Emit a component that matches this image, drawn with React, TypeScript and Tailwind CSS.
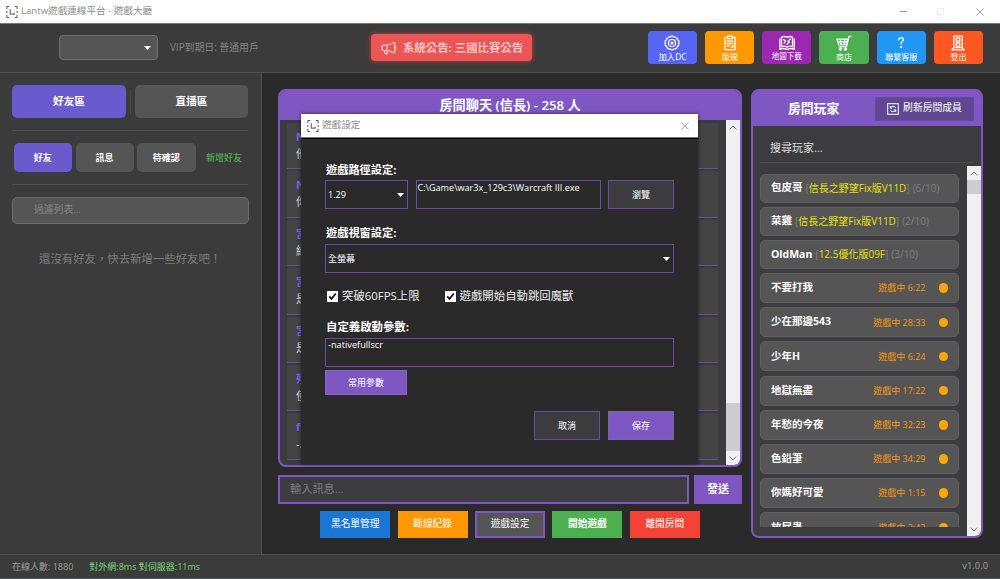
import React from 'react';
import clsx from 'clsx';

interface Player {
  name: string;
  time: string;
}

interface Room {
  host: string;
  map: string;
  slots: string;
}

const rooms: Room[] = [
  { host: '包皮哥', map: '信長之野望Fix版V11D', slots: '(6/10)' },
  { host: '菜雞', map: '信長之野望Fix版V11D', slots: '(2/10)' },
  { host: 'OldMan', map: '12.5優化版09F', slots: '(3/10)' },
];

const players: Player[] = [
  { name: '不要打我', time: '6:22' },
  { name: '少在那邊543', time: '28:33' },
  { name: '少年H', time: '6:24' },
  { name: '地獄無盡', time: '17:22' },
  { name: '年愁的今夜', time: '32:23' },
  { name: '色鉛筆', time: '34:29' },
  { name: '你媽好可愛', time: '1:15' },
  { name: '放屁蟲', time: '2:42' },
];

const messages = [
  { name: 'Nick', text: '他在嗎' },
  { name: 'Nick', text: '你好' },
  { name: '宮本', text: '給我' },
  { name: '宮本', text: '是喔' },
  { name: '宮本', text: '是的' },
  { name: '殘月', text: '使用' },
  { name: 'fire', text: '-.-' },
];

const iconProps = {
  viewBox: '0 0 16 16',
  fill: 'none',
  stroke: 'currentColor',
  strokeWidth: 1.3,
  strokeLinecap: 'round' as const,
  strokeLinejoin: 'round' as const,
  className: 'size-4 shrink-0',
};

const BadgeIcon = () => (
  <svg {...iconProps} strokeWidth={1.2}>
    <path d="M6 2.200Q8 0 10 2.200Q13 1.800 13.300 4.600Q16.200 6 14.400 8Q16.200 10 13.300 11.400Q13 14.200 10 13.800Q8 16 6 13.800Q3 14.200 2.700 11.400Q-.2 10 1.600 8Q-.2 6 2.700 4.600Q3 1.800 6 2.200z" />
    <circle cx="8" cy="8" r="3.500" />
    <circle cx="8" cy="8" r=".9" />
  </svg>
);

const ClipboardIcon = () => (
  <svg {...iconProps}>
    <path d="M5.500 2.300H3v12.400h10V2.300h-2.500" />
    <path d="M5.600 1.100h4.800v2.600H5.600zM5.200 6.200h5.600M5.200 8.500h5.600M5.200 10.800h2.500M10.900 10.500v1.700H9.400" />
  </svg>
);

const MapIcon = () => (
  <svg {...iconProps}>
    <path d="M2.500 2.200C4.500 1 6.500 1.500 8 2.600c1.500-1.100 3.500-1.600 5.500-.4v9.600c-2-1.200-4-.7-5.500.4-1.500-1.100-3.500-1.600-5.500-.4z" />
    <path d="M.8 4v10.300c2.500-1.100 5.200-.9 7.200.2 2-1.100 4.700-1.300 7.200-.2V4" />
    <path d="M4.600 4.600l2 1.300-1.500 2.300M11.500 4l-2.500 2 1.600 1.400M8 9.300l1.600-2" />
  </svg>
);

const CartIcon = () => (
  <svg {...iconProps}>
    <path d="M.9 4.200h10.600L10.300 9.700H2.800zM15 1.400h-2l-2.500 10.300H3.200M1.800 6.900h9M4.300 4.400l.7 5.200M8.700 4.400l-.7 5.200" />
    <circle cx="4.500" cy="13.900" r="1.100" />
    <circle cx="9.500" cy="13.900" r="1.100" />
  </svg>
);

const QuestionIcon = () => (
  <svg {...iconProps} strokeWidth={1.4}>
    <path d="M5.900 4.800C6 3.200 7 2.600 8.100 2.600c1.300 0 2.200.8 2.200 2 0 1.900-2.200 2.200-2.200 4.500" />
    <circle cx="8.100" cy="12.200" r=".4" fill="currentColor" />
  </svg>
);

const DoorIcon = () => (
  <svg {...iconProps}>
    <path d="M3.800 12.600V1.200h8.400v11.400M3.800 12.600L1.800 14.800h12.400l-2-2.200zM6.200 3.200h3.600v3H6.200zM6.200 8h3.600v3.200H6.200z" />
  </svg>
);

const MegaphoneIcon = () => (
  <svg {...iconProps} strokeWidth={1.2}>
    <path d="M6 5.200l7.800-2.700v10.300L6 10.500M6 5.200H3C1.500 5.200.8 6.500.8 7.900s.8 2.600 2.200 2.600h3zM6 5.200v5.300M3.200 10.700l.9 3h2.500l-.7-3M13.800 5.800c1.400.3 1.400 3.400 0 3.700" />
  </svg>
);

const RefreshIcon = () => (
  <svg viewBox="0 0 12 12" fill="none" stroke="currentColor" strokeWidth="1" className="size-3 shrink-0">
    <rect x=".7" y=".7" width="10.600" height="10.600" />
    <path d="M8.600 5A2.700 2.700 0 0 0 3.500 5M3.400 7a2.700 2.700 0 0 0 5.100 0M3.300 3v2.200h2M8.700 9V6.800h-2" />
  </svg>
);

const AppLogo = () => (
  <svg viewBox="0 0 12 12" fill="none" stroke="#444" strokeWidth=".9" className="size-3 shrink-0">
    <path d="M3.200.5H.9v2.700M.9 5v2M.9 8.800v2.700h2.300M8.800.5h2.300v2.700M11.100 5v2M11.100 8.800v2.700H8.800" />
    <path d="M4.300 3.200v5h3.900V6.800" stroke="#777" strokeWidth="1.300" />
  </svg>
);

const CloseIcon = () => (
  <svg viewBox="0 0 8 8" fill="none" stroke="#999" strokeWidth=".9" className="size-2">
    <path d="M.5.5l7 7M7.500.5l-7 7" />
  </svg>
);

const Caret = () => (
  <svg viewBox="0 0 7 4" fill="#fff" className="h-1 w-[7px] shrink-0">
    <path d="M0 0h7L3.500 4z" />
  </svg>
);

const Chevron = ({ up }: { up?: boolean }) => (
  <svg viewBox="0 0 8 5" fill="none" stroke="#777" strokeWidth="1" className={clsx('h-[5px] w-2', up && 'rotate-180')}>
    <path d="M.8.6L4 4 7.200.6" />
  </svg>
);

const actions = [
  { label: '加入DC', color: 'bg-[#5865f2]', size: 'text-[8.4px]', Icon: BadgeIcon },
  { label: '版規', color: 'bg-[#ff9800]', size: 'text-[8px]', Icon: ClipboardIcon },
  { label: '地圖下載', color: 'bg-[#9c27b0]', size: 'text-[7.5px]', Icon: MapIcon },
  { label: '商店', color: 'bg-[#4caf50]', size: 'text-[8px]', Icon: CartIcon },
  { label: '聯繫客服', color: 'bg-[#2196f3]', size: 'text-[8px]', Icon: QuestionIcon },
  { label: '登出', color: 'bg-[#ff5722]', size: 'text-[8px]', Icon: DoorIcon },
];

const TitleBar = () => (
  <div className="flex h-6 shrink-0 items-center border-b border-[#777] bg-white pl-1.5 pr-4">
    <AppLogo />
    <span className="ml-[3px] text-[9.6px] text-[#8c8c8c]">Lantw遊戲連線平台 - 遊戲大廳</span>
    <div className="ml-auto flex items-center">
      <span className="h-px w-[7px] bg-[#999]" />
      <span className="ml-[30px] size-[7px] border border-[#eee]" />
      <span className="ml-8">
        <CloseIcon />
      </span>
    </div>
  </div>
);

const Header = () => (
  <header className="flex h-[49px] shrink-0 items-start border-b border-[#505050] bg-[#3b3b3b] pt-[7px]">
    <div className="ml-[59px] mt-1 flex h-[25px] w-[99px] items-center justify-end rounded-[4px] border border-[#707070] bg-[#555] pr-[6px]">
      <Caret />
    </div>
    <span className="ml-3 mt-[9px] w-[201px] text-[9.9px] leading-[15px] text-[#858585]">VIP到期日: 普通用戶</span>
    <div className="mt-[3px] flex h-[27px] w-[161px] items-center rounded-[4px] bg-[#eb5555] pl-[10px] text-[#f9c3c3] shadow-[0_0_5px_#c93a3a]">
      <MegaphoneIcon />
      <span className="ml-1.5 text-[11.4px] font-bold">系統公告: 三國比賽公告</span>
    </div>
    <div className="ml-auto mr-[17px] flex gap-2">
      {actions.map(({ label, color, size, Icon }) => (
        <button key={label} className={clsx('flex h-[33px] w-[49.2px] flex-col items-center rounded-[4px] pt-1 text-white', color)}>
          <Icon />
          <span className={clsx('leading-[11px]', size)}>{label}</span>
        </button>
      ))}
    </div>
  </header>
);

const Sidebar = () => (
  <aside className="w-[262px] shrink-0 border-r border-[#505050] bg-[#3b3b3b] px-3 pt-3">
    <div className="flex items-center text-[10.6px] font-bold text-white">
      <button className="h-[33px] w-[114px] rounded-[5px] bg-[#6a5acd]">好友區</button>
      <span className="mx-1 h-6 w-px bg-[#4d4d4d]" />
      <button className="h-[33px] w-[113px] rounded-[5px] bg-[#555]">直播區</button>
    </div>
    <div className="mt-3 h-px w-[236px] bg-[#505050]" />
    <div className="mt-3 flex items-center gap-[3.5px] pl-[1.5px] text-[9px] font-bold text-white">
      <button className="h-[29px] w-[58.5px] rounded-[5px] bg-[#6a5acd]">好友</button>
      <button className="h-[29px] w-[58px] rounded-[5px] bg-[#555]">訊息</button>
      <button className="h-[29px] w-[58.5px] rounded-[5px] bg-[#555]">待確認</button>
      <span className="ml-[7px] font-medium text-[#4caf50]">新增好友</span>
    </div>
    <div className="mt-3 h-px w-[236px] bg-[#505050]" />
    <div className="mt-3 flex h-[27px] w-[237px] items-center rounded-[5px] border border-[#6c6c6c] bg-[#555] pl-[21px] text-[9.8px] text-[#868686]">
      過濾列表...
    </div>
    <p className="mt-[26px] pl-[27px] text-[11.4px] leading-[17px] text-[#7d7d7d]">還沒有好友，快去新增一些好友吧！</p>
  </aside>
);

const ChatPanel = () => (
  <section className="flex h-[378px] flex-col overflow-hidden rounded-[8px] border-2 border-[#7e57c2] bg-[#3c3c3e]">
    <div className="flex h-[29px] shrink-0 items-center justify-center bg-[#7e57c2] text-[13.2px] font-semibold text-white">
      房間聊天 (信長) - 258 人
    </div>
    <div className="flex min-h-0 flex-1">
      <div className="flex-1 pl-[7px] pr-[8px] pt-[3px]">
        {messages.map((m, i) => (
          <div key={i} className="mb-[2px] flex h-[46.4px] flex-col border-b border-[#6a4ba5] bg-[#444] pl-[9px] pt-[5px] leading-[17px]">
            <span className="text-[11px] font-bold text-[#7b68ee]">{m.name}</span>
            <span className="text-[11px] text-[#ddd]">{m.text}</span>
          </div>
        ))}
      </div>
      <div className="flex w-3.5 shrink-0 flex-col items-center bg-[#f0f0f0]">
        <div className="flex h-3.5 items-center">
          <Chevron up />
        </div>
        <div className="mt-auto h-12 w-full bg-[#cdcdcd]" />
        <div className="flex h-[14px] items-center">
          <Chevron />
        </div>
      </div>
    </div>
  </section>
);

const ChatFooter = () => (
  <>
    <div className="mt-2 flex h-[29px] gap-[5px]">
      <div className="flex w-[411px] items-center border-2 border-[#7e57c2] bg-[#3c3c3e] pl-2.5 text-[11.2px] text-[#7d7d7d]">輸入訊息...</div>
      <button className="flex-1 bg-[#7e57c2] text-[11px] font-bold text-white">發送</button>
    </div>
    <div className="mt-[7px] flex justify-center gap-[7.4px] text-[9.7px] text-white">
      <button className="h-[27px] w-[70px] bg-[#1976d2]">黑名單管理</button>
      <button className="h-[27px] w-[70px] bg-[#ff9800]">斷線紀錄</button>
      <button className="h-[27px] w-[70px] border-2 border-[#7e57c2] bg-[#555]">遊戲設定</button>
      <button className="h-[27px] w-[70px] bg-[#4caf50] font-bold">開始遊戲</button>
      <button className="h-[27px] w-[70px] bg-[#f44336]">離開房間</button>
    </div>
  </>
);

const PlayerPanel = () => (
  <section className="flex h-[449px] w-[232px] flex-col overflow-hidden rounded-[8px] border-2 border-[#7e57c2] bg-[#3c3c3e]">
    <div className="flex h-[35px] shrink-0 items-center bg-[#7e57c2] pl-[35px] text-white">
      <h2 className="text-[12.8px] font-bold">房間玩家</h2>
      <button className="ml-auto mr-[7px] flex h-6 w-[99px] items-center justify-center gap-1 border border-[#66499f] bg-[#5f4890] text-[9.8px]">
        <RefreshIcon />
        刷新房間成員
      </button>
    </div>
    <div className="mx-[7px] flex h-[37px] shrink-0 items-center border-b border-[#4d4d4f] pl-[10px] pt-[9px] text-[11px] text-[#ddd]">搜尋玩家...</div>
    <div className="mt-[3px] flex min-h-0 flex-1">
      <div className="mb-[9px] ml-[7px] w-[199px] overflow-hidden pt-[7.5px]">
        {rooms.map((r) => (
          <div key={r.host} className="mb-[4.2px] flex h-[29px] items-center gap-[3px] whitespace-nowrap rounded-[5px] border border-[#606060] bg-[#555] pl-2.5 text-[10px] text-[#808080]">
            <span className="text-[10.5px] font-bold text-white">{r.host}</span>
            <span>
              [<span className="text-[#e3e30a]">{r.map}</span>]
            </span>
            <span>{r.slots}</span>
          </div>
        ))}
        {players.map((p) => (
          <div key={p.name} className="mb-[4.2px] flex h-[30px] items-center rounded-[5px] border border-[#606060] bg-[#555] pl-2.5 pr-[10px]">
            <span className="text-[10.5px] font-bold text-white">{p.name}</span>
            <span className="ml-auto text-[9px] text-[#f59b14]">遊戲中 {p.time}</span>
            <span className="ml-[13px] size-[9.5px] rounded-full bg-[#ffa500]" />
          </div>
        ))}
      </div>
      <div className="ml-auto flex w-3.5 shrink-0 flex-col items-center bg-[#f0f0f0]">
        <div className="flex h-3.5 items-center">
          <Chevron up />
        </div>
        <div className="h-[14px] w-full bg-[#cdcdcd]" />
        <div className="mt-auto flex h-[14px] items-center">
          <Chevron />
        </div>
      </div>
    </div>
  </section>
);

const CheckItem = ({ label }: { label: string }) => (
  <div className="flex items-center gap-[4px] text-[11.4px] text-[#eee]">
    <svg viewBox="0 0 11 11" className="size-[11px]">
      <rect width="11" height="11" fill="#fff" />
      <path d="M2.200 5.400l2.300 2.500 4.300-5.400" fill="none" stroke="#111" strokeWidth="1.700" />
    </svg>
    {label}
  </div>
);

const SettingsDialog = () => (
  <div className="absolute left-[301px] top-[114px] flex h-[350px] w-[397px] flex-col bg-[#2a2a2a] text-white shadow-[0_0_4px_rgba(0,0,0,0.6)]">
    <div className="flex h-6 shrink-0 items-center border-b border-[#777] bg-white pl-[6px] pr-[9px]">
      <AppLogo />
      <span className="ml-[3px] text-[9.6px] text-[#8c8c8c]">遊戲設定</span>
      <span className="ml-auto">
        <CloseIcon />
      </span>
    </div>
    <div className="flex flex-1 flex-col border-t border-black pl-[24px] pr-[24px]">
      <h3 className="mt-[23px] pl-px text-[11.2px] font-bold leading-4">遊戲路徑設定:</h3>
      <div className="mt-[2px] flex h-[29px] justify-between text-[9.1px]">
        <div className="flex w-[83px] items-center justify-between border border-[#6a4ba5] pl-[2px] pr-[3px]">
          1.29
          <Caret />
        </div>
        <div className="w-[185px] whitespace-nowrap border border-[#6a4ba5] pl-px leading-[13px]">C:\Game\war3x_129c3\Warcraft III.exe</div>
        <button className="w-[66px] border border-[#6a4ba5] bg-[#3c3c3e] text-[9px]">瀏覽</button>
      </div>
      <h3 className="mt-4 pl-px text-[11.2px] font-bold leading-4">遊戲視窗設定:</h3>
      <div className="mt-[3px] flex h-[29px] items-center justify-between border border-[#6a4ba5] pl-[2px] pr-[3px] text-[9px]">
        全螢幕
        <Caret />
      </div>
      <div className="mt-[15px] flex h-4 gap-[25px] pl-[2px]">
        <CheckItem label="突破60FPS上限" />
        <CheckItem label="遊戲開始自動跳回魔獸" />
      </div>
      <h3 className="mt-[15px] pl-px text-[11.4px] font-bold leading-4">自定義啟動參數:</h3>
      <div className="mt-[3px] h-[29px] border border-[#6a4ba5] pl-[2px] text-[9.2px] leading-[12px]">-nativefullscr</div>
      <button className="mt-[3px] h-[25px] w-[82px] border border-[#8763c8] bg-[#7e57c2] text-[9px]">常用參數</button>
      <div className="mt-4 flex h-[29px] justify-end gap-2 text-[9px]">
        <button className="w-[66px] border border-[#6a4ba5] bg-[#3c3c3e]">取消</button>
        <button className="w-[66px] border border-[#776a8f] bg-[#7e57c2]">保存</button>
      </div>
    </div>
  </div>
);

const StatusBar = () => (
  <footer className="flex h-[25px] shrink-0 items-center border-b border-t border-b-[#4c5a66] border-t-[#505050] bg-[#3b3b3b] px-3 text-[9px]">
    <span className="text-[#9c9c9c]">在線人數: 1880</span>
    <span className="ml-4 text-[#76d67a]">對外網:8ms 對伺服器:11ms</span>
    <span className="ml-auto text-[9.4px] text-[#9c9c9c]">v1.0.0</span>
  </footer>
);

const App: React.FC = () => {
  return (
    <div className="relative flex h-[579px] w-[1000px] flex-col overflow-hidden bg-[#2a2a2a] font-['Open_Sans','Noto_Sans_CJK_TC',sans-serif]">
      <TitleBar />
      <Header />
      <div className="flex min-h-0 flex-1">
        <Sidebar />
        <main className="ml-4 mt-4 w-[464px]">
          <ChatPanel />
          <ChatFooter />
        </main>
        <div className="ml-[9px] mt-4">
          <PlayerPanel />
        </div>
      </div>
      <StatusBar />
      <SettingsDialog />
    </div>
  );
};

export default App;
